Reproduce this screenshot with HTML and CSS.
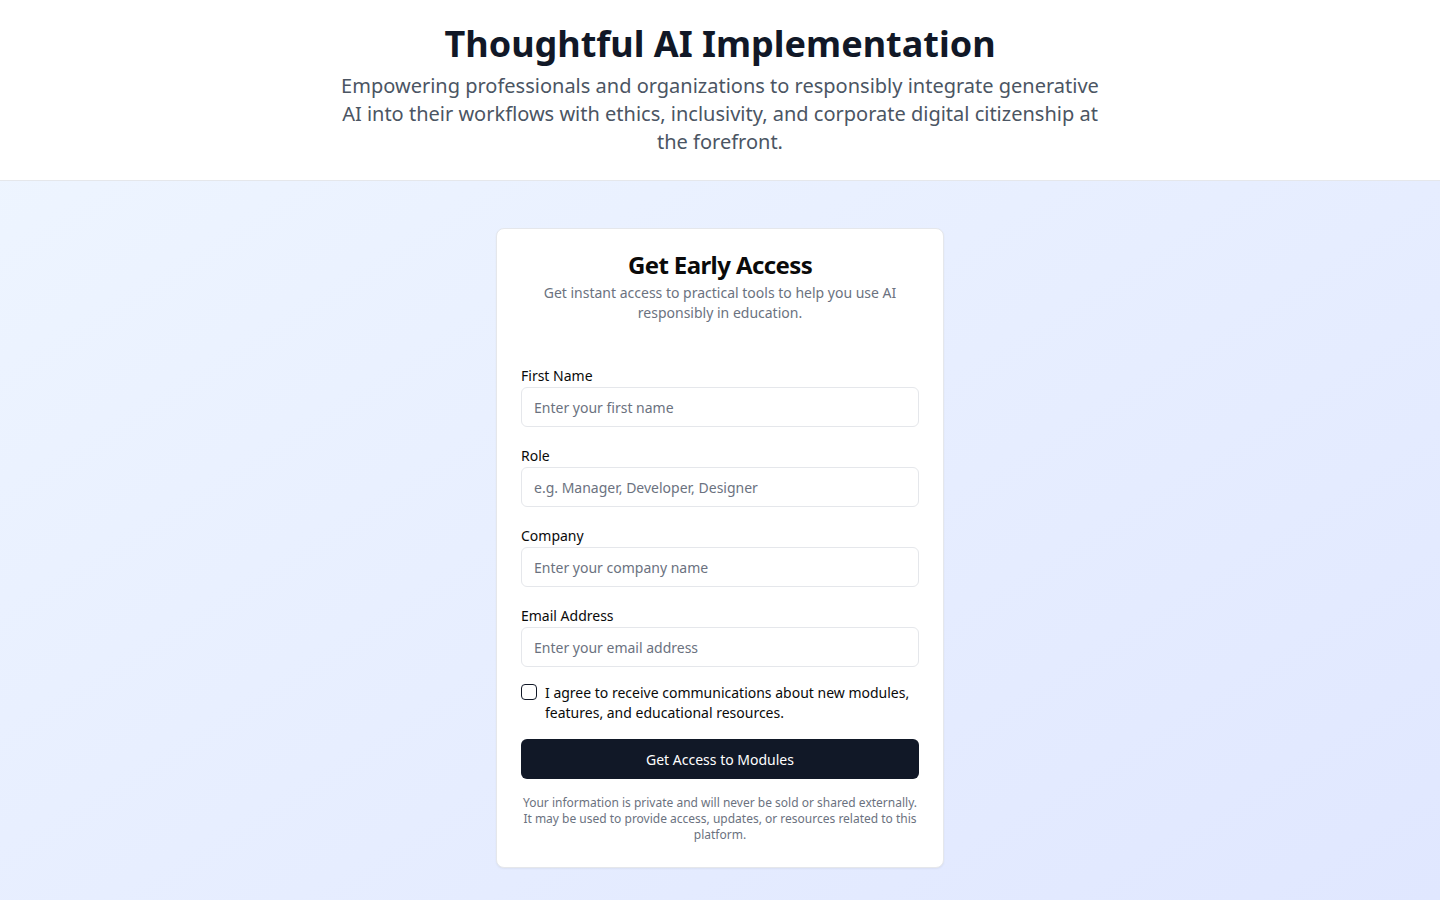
FILE: index.html
```
<!DOCTYPE html>
<html lang="en">
<head>
<meta charset="utf-8">
<title>Thoughtful AI Implementation</title>
<link rel="stylesheet" href="styles.css">
</head>
<body>
<header class="site-header">
  <h1 class="site-title">Thoughtful AI Implementation</h1>
  <p class="site-subtitle">Empowering professionals and organizations to responsibly integrate generative AI into their workflows with ethics, inclusivity, and corporate digital citizenship at the forefront.</p>
</header>
<main class="main">
  <section class="card">
    <div class="card-header">
      <h2 class="card-title">Get Early Access</h2>
      <p class="card-desc">Get instant access to practical tools to help you use AI responsibly in education.</p>
    </div>
    <form class="form">
      <div class="field">
        <label class="label" for="fn">First Name</label>
        <input class="input" id="fn" type="text" placeholder="Enter your first name">
      </div>
      <div class="field">
        <label class="label" for="role">Role</label>
        <input class="input" id="role" type="text" placeholder="e.g. Manager, Developer, Designer">
      </div>
      <div class="field">
        <label class="label" for="co">Company</label>
        <input class="input" id="co" type="text" placeholder="Enter your company name">
      </div>
      <div class="field field-last">
        <label class="label" for="em">Email Address</label>
        <input class="input" id="em" type="email" placeholder="Enter your email address">
      </div>
      <div class="consent">
        <input class="checkbox" id="agree" type="checkbox">
        <label class="consent-text" for="agree">I agree to receive communications about new modules, features, and educational resources.</label>
      </div>
      <button class="button" type="button">Get Access to Modules</button>
      <p class="privacy">Your information is private and will never be sold or shared externally. It may be used to provide access, updates, or resources related to this platform.</p>
    </form>
  </section>
</main>
</body>
</html>
```
FILE: styles.css
```
* { box-sizing: border-box; }
html, body { margin: 0; padding: 0; }
body {
  font-family: "Noto Sans", "Open Sans", sans-serif;
  color: #0a0a0a;
  min-height: 100vh;
  background: linear-gradient(to bottom right, #eff6ff, #e0e7ff);
}
.site-header {
  background: #ffffff;
  border-bottom: 1px solid #e5e7eb;
  padding: 24px 16px 24px;
  text-align: center;
}
.site-title {
  margin: 0 0 8px;
  font-size: 36px;
  line-height: 40px;
  font-weight: 700;
  color: #111827;
}
.site-subtitle {
  margin: 0 auto;
  max-width: 768px;
  font-size: 20px;
  line-height: 28px;
  color: #4b5563;
}
.main {
  display: flex;
  justify-content: center;
  padding: 47px 16px 32px;
}
.card {
  width: 448px;
  background: #ffffff;
  border: 1px solid #e5e7eb;
  border-radius: 8px;
  box-shadow: 0 1px 2px rgba(0, 0, 0, 0.05);
  padding: 24px;
}
.card-header {
  text-align: center;
  display: flex;
  flex-direction: column;
  gap: 6px;
  margin-bottom: 43px;
}
.card-title {
  margin: 0;
  font-size: 24px;
  line-height: 24px;
  font-weight: 700;
  letter-spacing: -0.6px;
  color: #0a0a0a;
}
.card-desc {
  margin: 0;
  font-size: 14px;
  line-height: 20px;
  color: #6b7280;
}
.form {
  display: flex;
  flex-direction: column;
}
.field {
  display: flex;
  flex-direction: column;
  gap: 1px;
  margin-bottom: 19px;
}
.field-last { margin-bottom: 16px; }
.label {
  font-size: 14px;
  line-height: 20px;
  font-weight: 400;
  color: #0a0a0a;
}
.input {
  height: 40px;
  width: 100%;
  border: 1px solid #e5e7eb;
  border-radius: 6px;
  background: #ffffff;
  padding: 8px 12px;
  font-family: inherit;
  font-size: 14px;
  color: #0a0a0a;
  outline: none;
}
.input::placeholder { color: #6b7280; }
.consent {
  display: flex;
  align-items: flex-start;
  gap: 8px;
  margin-bottom: 16px;
}
.checkbox {
  appearance: none;
  -webkit-appearance: none;
  flex: 0 0 16px;
  width: 16px;
  height: 16px;
  margin: 1px 0 0;
  border: 1px solid #111827;
  border-radius: 4px;
  background: #ffffff;
}
.consent-text {
  font-size: 14px;
  line-height: 20px;
  color: #0a0a0a;
}
.button {
  height: 40px;
  width: 100%;
  border: none;
  border-radius: 6px;
  background: #111827;
  color: #ffffff;
  font-family: inherit;
  font-size: 14px;
  font-weight: 400;
  cursor: pointer;
  margin-bottom: 16px;
}
.privacy {
  margin: 0;
  text-align: center;
  font-size: 12px;
  line-height: 16px;
  color: #6b7280;
}
```
